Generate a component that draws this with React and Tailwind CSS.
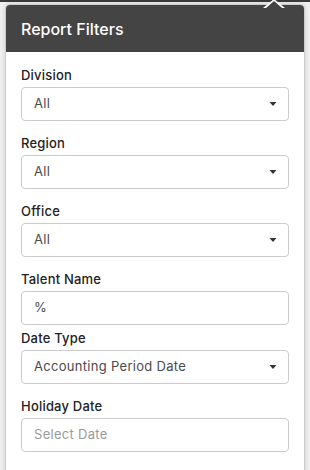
export default function App() {
  const fields = [
    { label: "Division", value: "All", select: true },
    { label: "Region", value: "All", select: true },
    { label: "Office", value: "All", select: true },
    { label: "Talent Name", value: "%", tight: true },
    { label: "Date Type", value: "Accounting Period Date", select: true },
    { label: "Holiday Date", placeholder: "Select Date" },
  ];

  return (
    <div className="relative w-[310px] h-[470px] overflow-hidden bg-[#efefef] font-['Inter',sans-serif]">
      <div className="h-[2px] bg-[#3a3a3a]" />
      {/* caret pointing at the trigger */}
      <svg className="absolute left-[262px] top-0" width="24" height="8" viewBox="0 0 24 8">
        <polygon points="1,8 12,-1 23,8" fill="#ffffff" />
        <polygon points="4,8 12,1 20,8" fill="#444444" />
      </svg>
      <div className="mt-[2px] ml-[5px] mr-[5px] h-[480px] rounded-t-[5px] border border-[#cdcdcd] bg-white shadow-[0_0_4px_rgba(0,0,0,0.15)]">
        <div className="h-[47px] rounded-t-[4px] bg-[#444444] flex items-center px-[15px]">
          <h2 className="text-[16px] font-medium text-white">Report Filters</h2>
        </div>
        <div className="px-[15px] pt-[14px]">
          {fields.map((f) => (
            <div key={f.label} className={f.tight ? "mb-[4px]" : "mb-[13px]"}>
              <label className="block text-[13px] leading-[18px] font-medium text-[#222] tracking-[0.2px] mb-[3px]">
                {f.label}
              </label>
              <div className="h-[34px] rounded-[4px] border border-[#cccccc] bg-white flex items-center justify-between pl-[12px] pr-[11px]">
                <span className={"text-[13px] tracking-[0.3px] " + (f.placeholder ? "text-[#9a9a9a]" : "text-[#4a4a4a]")}>
                  {f.placeholder || f.value}
                </span>
                {f.select && (
                  <svg width="8" height="4" viewBox="0 0 8 4">
                    <polygon points="0.5,0 7.5,0 4,4" fill="#333" />
                  </svg>
                )}
              </div>
            </div>
          ))}
        </div>
      </div>
    </div>
  );
}
